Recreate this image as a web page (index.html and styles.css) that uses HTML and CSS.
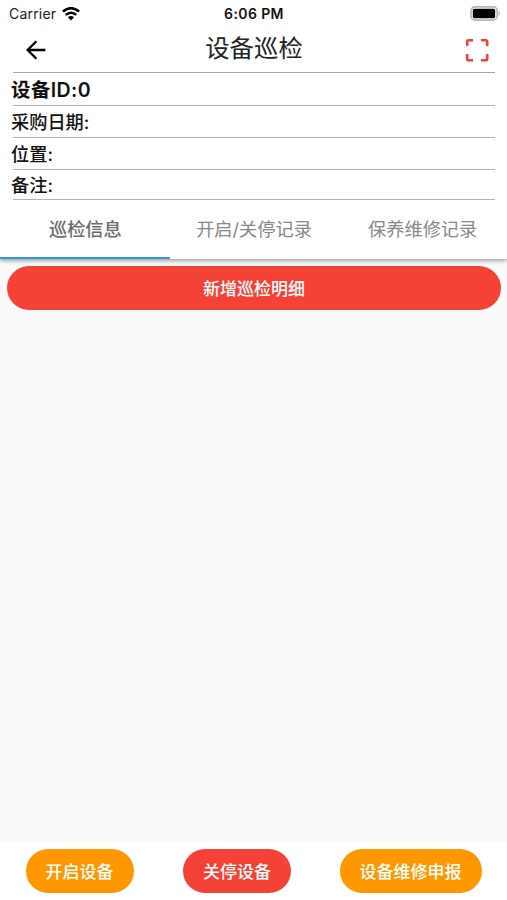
FILE: index.html
```html
<!DOCTYPE html>
<html lang="zh-CN">
<head>
    <meta charset="UTF-8" />
    <meta name="viewport" content="width=device-width, initial-scale=1.0" />
    <title>设备巡检</title>
    <link rel="stylesheet" href="styles.css">
</head>
<body>
<div class="status-bar">
    <div class="carrier">
        <span>Carrier</span>
        <svg class="wifi" width="18" height="14" viewBox="0 0 18 14">
            <path d="M0.9 4.6 Q9 -2.2 17.1 4.6" fill="none" stroke="#000" stroke-width="2.6"/>
            <path d="M3.7 7.9 Q9 3.5 14.3 7.9" fill="none" stroke="#000" stroke-width="2.5"/>
            <path d="M5.9 10.2 Q9 7.8 12.1 10.2 L9 13.4 Z"/>
        </svg>
    </div>
    <div class="time">6:06 PM</div>
    <svg class="battery" width="31" height="15" viewBox="0 0 31 15">
        <rect x="1" y="0.9" width="26.2" height="13.2" rx="4" fill="#fff" stroke="#b8b8b8" stroke-width="1.7"/>
        <rect x="2.8" y="2.8" width="22.4" height="9.4" rx="1.6"/>
        <path d="M28.6 5 Q31.2 7.5 28.6 10 Z" fill="#b0b0b0"/>
    </svg>
</div>

<header class="app-bar">
    <svg class="back" width="20" height="20" viewBox="0 0 20 20">
        <path d="M19.4 10 H2 M10.4 1.2 L1.6 10 L10.4 18.8" fill="none" stroke="#000" stroke-width="2.3"/>
    </svg>
    <h1>设备巡检</h1>
    <svg class="scan" width="24" height="24" viewBox="0 0 24 24">
        <path d="M2.2 8 V3.7 Q2.2 2.2 3.7 2.2 H8 M16 2.2 H20.7 Q22.2 2.2 22.2 3.7 V8 M22.2 16 V20.7 Q22.2 22.2 20.7 22.2 H16 M8 22.2 H3.7 Q2.2 22.2 2.2 20.7 V16" fill="none" stroke="#ee4338" stroke-width="2.6"/>
    </svg>
</header>

<section class="info">
    <div class="row device-id">设备ID:0</div>
    <div class="row">采购日期:</div>
    <div class="row">位置:</div>
    <div class="row last">备注:</div>
</section>

<nav class="tabs">
    <div class="tab active">巡检信息</div>
    <div class="tab">开启/关停记录</div>
    <div class="tab">保养维修记录</div>
</nav>

<main class="content">
    <button class="btn red add">新增巡检明细</button>
</main>

<footer class="actions">
    <button class="btn orange">开启设备</button>
    <button class="btn red">关停设备</button>
    <button class="btn orange wide">设备维修申报</button>
</footer>
</body>
</html>
```

FILE: styles.css
```css
* {
    box-sizing: border-box;
}

body {
    margin: 0;
    height: 100vh;
    display: flex;
    flex-direction: column;
    overflow: hidden;
    background-color: #fff;
    color: #111;
    font-family: Inter, "Noto Sans CJK SC", sans-serif;
}

.status-bar {
    display: grid;
    grid-template-columns: 1fr auto 1fr;
    align-items: center;
    height: 27px;
    padding: 0 6px 0 8px;
    font-size: 14px;
    color: #222;
}

.carrier {
    display: flex;
    align-items: center;
    gap: 6px;
    padding-left: 1px;
    letter-spacing: 0.2px;
}

.time {
    font-weight: 600;
    font-size: 14px;
    letter-spacing: 0.4px;
    margin-right: 1px;
    color: #111;
}

.battery {
    justify-self: end;
}

.app-bar {
    display: flex;
    align-items: center;
    justify-content: space-between;
    height: 45px;
    padding: 0 18px 0 26px;
}

.app-bar h1 {
    margin: 0 3px 4px 0;
    font-size: 24.4px;
    line-height: 36px;
    font-weight: 400;
    color: #222;
}

.info {
    margin: 0 12px 0 13px;
    border-top: 1px solid #a8a8a8;
}

.row {
    height: 32px;
    border-bottom: 1px solid #b4b4b4;
    font-size: 18.2px;
    line-height: 33px;
    font-weight: 500;
    text-indent: -2px;
}

.device-id {
    height: 33px;
    font-size: 19.5px;
    line-height: 34px;
    font-weight: 600;
    letter-spacing: 0.4px;
}

.last {
    height: 30px;
    line-height: 31px;
}

.tabs {
    display: flex;
    height: 59px;
    position: relative;
    background-color: #fff;
    box-shadow: 0 2px 4px rgba(0, 0, 0, 0.35);
    clip-path: inset(0 0 -8px 0);
}

.tab {
    flex: 1;
    border-bottom: 2px solid transparent;
    text-align: center;
    font-size: 18.2px;
    line-height: 59px;
    color: #888;
}

.tab.active {
    padding-left: 1px;
    border-bottom-color: #2d96dc;
    font-weight: 500;
    color: #6c6c6c;
}

.content {
    flex: 1;
    padding: 7px 6px 0 7px;
    background-color: #fafafa;
}

.btn {
    display: block;
    width: 108px;
    height: 44px;
    padding: 0 0 2px 0;
    border: none;
    border-radius: 22px;
    font-family: inherit;
    font-size: 17px;
    font-weight: 500;
    color: #fff;
}

.red {
    background-color: #f44336;
}

.orange {
    padding-right: 1px;
    background-color: #ff9800;
}

.add {
    width: 100%;
}

.wide {
    width: 142px;
}

.actions {
    display: flex;
    justify-content: space-between;
    height: 58px;
    padding: 7px 25px 0 26px;
    background-color: #fff;
}
```
